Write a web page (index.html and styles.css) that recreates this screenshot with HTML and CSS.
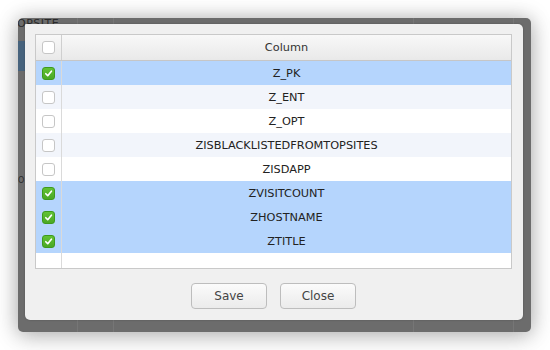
FILE: index.html
```
<!DOCTYPE html>
<html>
<head>
<meta charset="utf-8">
<link rel="stylesheet" href="styles.css">
</head>
<body>
<div class="frame">
  <div class="bg-title">OPSITE</div>
  <div class="bg-stripe"></div>
  <div class="bg-text">O</div>
  <div class="bg-line l1"></div>
  <div class="bg-line l2"></div>
  <div class="bg-line l3"></div>
  <div class="bg-line l4"></div>
  <div class="dialog">
    <div class="table">
      <div class="row head">
        <div class="cbcell"><span class="cb"></span></div>
        <div class="name">Column</div>
      </div>
      <div class="row sel">
        <div class="cbcell"><span class="cb on"><svg viewBox="0 0 13 13"><path d="M3.3 6.8 L5.6 9.1 L9.9 3.8" fill="none" stroke="#fff" stroke-width="2" stroke-linecap="round" stroke-linejoin="round"/></svg></span></div>
        <div class="name">Z_PK</div>
      </div>
      <div class="row alt">
        <div class="cbcell"><span class="cb"></span></div>
        <div class="name">Z_ENT</div>
      </div>
      <div class="row">
        <div class="cbcell"><span class="cb"></span></div>
        <div class="name">Z_OPT</div>
      </div>
      <div class="row alt">
        <div class="cbcell"><span class="cb"></span></div>
        <div class="name">ZISBLACKLISTEDFROMTOPSITES</div>
      </div>
      <div class="row">
        <div class="cbcell"><span class="cb"></span></div>
        <div class="name">ZISDAPP</div>
      </div>
      <div class="row sel">
        <div class="cbcell"><span class="cb on"><svg viewBox="0 0 13 13"><path d="M3.3 6.8 L5.6 9.1 L9.9 3.8" fill="none" stroke="#fff" stroke-width="2" stroke-linecap="round" stroke-linejoin="round"/></svg></span></div>
        <div class="name">ZVISITCOUNT</div>
      </div>
      <div class="row sel">
        <div class="cbcell"><span class="cb on"><svg viewBox="0 0 13 13"><path d="M3.3 6.8 L5.6 9.1 L9.9 3.8" fill="none" stroke="#fff" stroke-width="2" stroke-linecap="round" stroke-linejoin="round"/></svg></span></div>
        <div class="name">ZHOSTNAME</div>
      </div>
      <div class="row sel">
        <div class="cbcell"><span class="cb on"><svg viewBox="0 0 13 13"><path d="M3.3 6.8 L5.6 9.1 L9.9 3.8" fill="none" stroke="#fff" stroke-width="2" stroke-linecap="round" stroke-linejoin="round"/></svg></span></div>
        <div class="name">ZTITLE</div>
      </div>
      <div class="row filler">
        <div class="cbcell"></div>
        <div class="name"></div>
      </div>
    </div>
    <div class="footer">
      <button class="btn">Save</button>
      <button class="btn">Close</button>
    </div>
  </div>
</div>
</body>
</html>
```

FILE: styles.css
```
html, body {
  margin: 0;
  padding: 0;
  background: #ffffff;
  width: 550px;
  height: 350px;
  overflow: hidden;
  font-family: "DejaVu Sans", Verdana, sans-serif;
}

.frame {
  position: relative;
  margin: 18px 0 0 18px;
  width: 513px;
  height: 314px;
  background: #6c6c6c;
  border-radius: 5px;
  box-shadow: 0 0 20px rgba(0, 0, 0, 0.25), 0 6px 24px rgba(0, 0, 0, 0.15);
  overflow: hidden;
}

.bg-title {
  position: absolute;
  left: -1px;
  top: 0px;
  font-size: 11px;
  line-height: 12px;
  color: #2a2a2a;
  letter-spacing: 0.5px;
}

.bg-stripe {
  position: absolute;
  left: 0;
  top: 23px;
  width: 8px;
  height: 30px;
  background: #47637d;
}

.bg-text {
  position: absolute;
  left: 0px;
  top: 158px;
  width: 7px;
  font-size: 8px;
  line-height: 10px;
  color: #2a2a2a;
}

.bg-line {
  position: absolute;
  width: 1px;
  top: 0;
  bottom: 0;
  background: #767676;
}
.bg-line.l1 { left: 59px; }
.bg-line.l2 { left: 95px; }
.bg-line.l3 { left: 395px; }
.bg-line.l4 { left: 495px; }

.dialog {
  position: absolute;
  left: 7px;
  top: 6px;
  width: 498px;
  height: 296px;
  background: #f0f0f0;
  border-radius: 1px 5px 5px 5px;
  box-shadow: 0 0 2px rgba(0, 0, 0, 0.25);
  box-sizing: border-box;
  padding: 10px 11px 0 10px;
  display: flex;
  flex-direction: column;
}

.table {
  border: 1px solid #c9c9c9;
  background: #ffffff;
  display: flex;
  flex-direction: column;
  height: 235px;
  box-sizing: border-box;
}

.row {
  display: grid;
  grid-template-columns: 26px 1fr;
  height: 24px;
  font-size: 11.3px;
  color: #222;
}

.cbcell {
  border-right: 1px solid #dadada;
  display: flex;
  align-items: center;
  justify-content: center;
}

.name {
  display: flex;
  align-items: center;
  justify-content: center;
}

.row.head {
  height: 25px;
  border-bottom: 1px solid #c6c6c6;
  background: linear-gradient(#f8f8f8, #e9e9e9);
  color: #333;
}
.row.head .cbcell { border-right-color: #cfcfcf; }

.row.sel { background: #b5d5fd; }
.row.alt { background: #f2f5fb; }
.row.filler { flex: 1; }

.cb {
  width: 13px;
  height: 13px;
  box-sizing: border-box;
  border: 1px solid #c6c6c6;
  border-radius: 3px;
  background: #ffffff;
  display: block;
}

.cb.on {
  background: linear-gradient(#62c234, #4aa824);
  border-color: #3d9a1c;
}

.cb svg {
  display: block;
  width: 11px;
  height: 11px;
}

.footer {
  flex: 1;
  display: flex;
  justify-content: center;
  align-items: flex-start;
  padding-top: 14px;
  gap: 13px;
}

.btn {
  width: 76px;
  height: 26px;
  border: 1px solid #bdbdbd;
  border-radius: 4px;
  background: linear-gradient(#fbfbfb, #ebebeb);
  font-family: "DejaVu Sans", Verdana, sans-serif;
  font-size: 12px;
  color: #444;
  padding: 0;
}
```
